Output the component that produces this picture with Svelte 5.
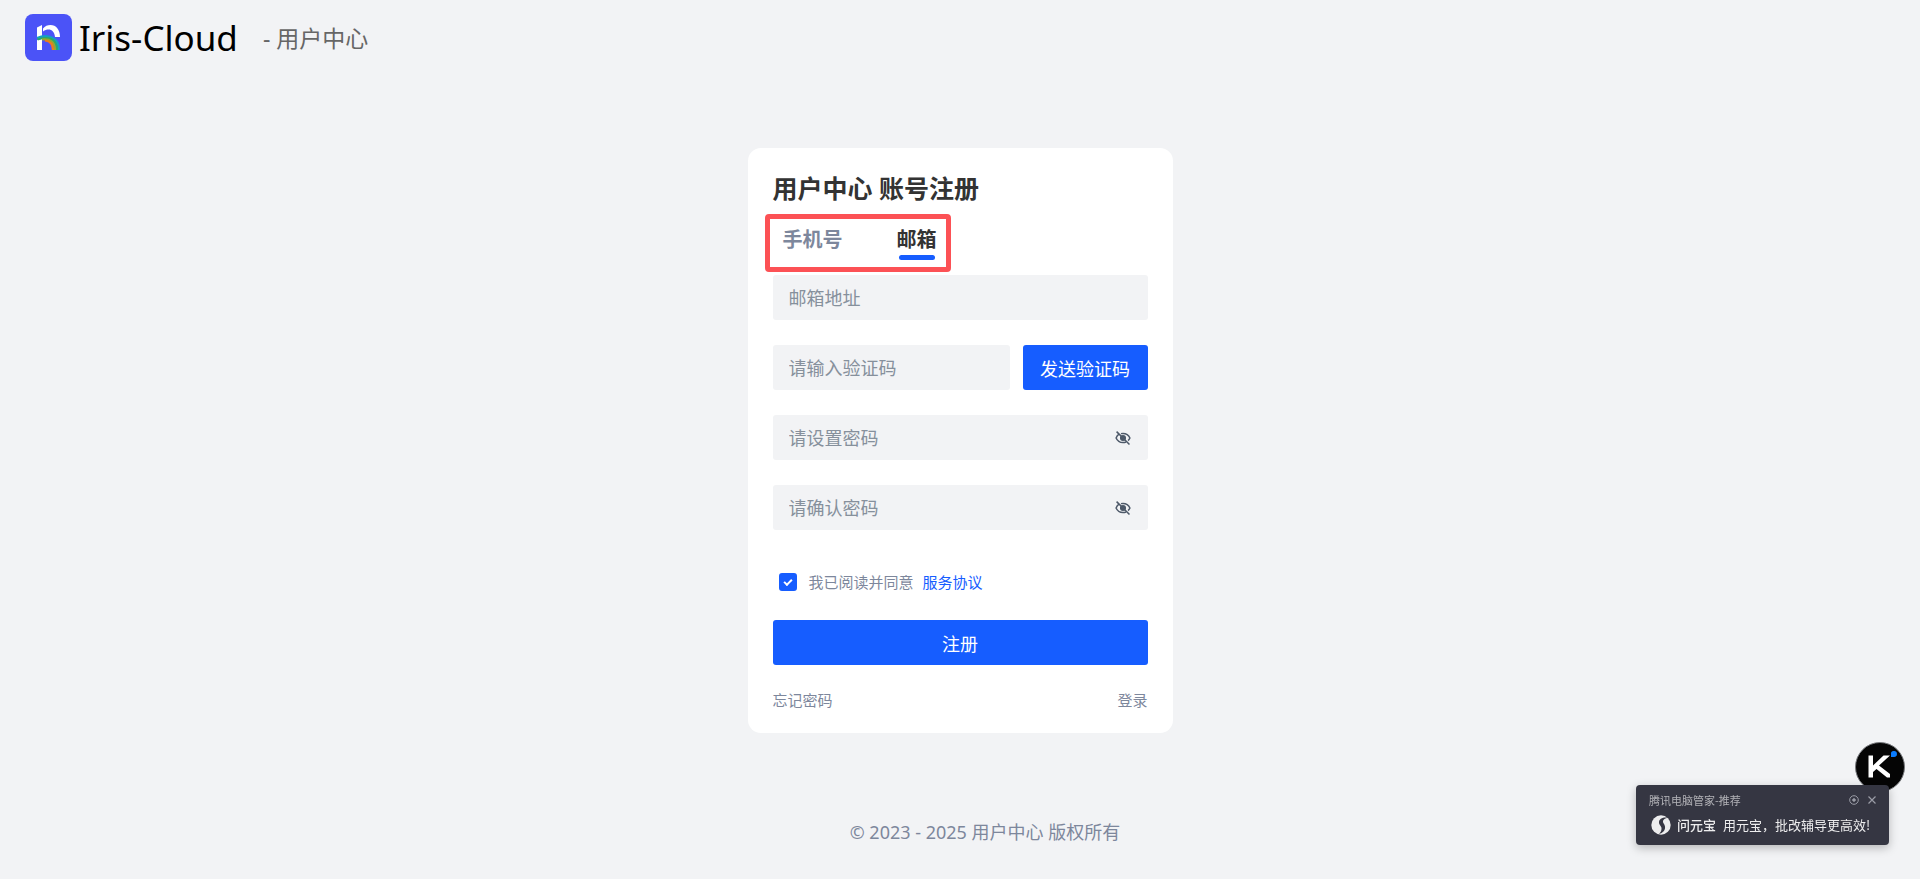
<script lang="ts">
	type Tab = 'phone' | 'email';

	const tabs: { id: Tab; label: string }[] = [
		{ id: 'phone', label: '手机号' },
		{ id: 'email', label: '邮箱' }
	];

	let activeTab: Tab = $state('email');
	let account = $state('');
	let code = $state('');
	let password = $state('');
	let confirmPassword = $state('');
	let showPassword = $state(false);
	let showConfirm = $state(false);
	let agreed = $state(true);
	let popupOpen = $state(true);

	const accountLabel = $derived(activeTab === 'email' ? '邮箱地址' : '手机号码');
</script>

{#snippet eyeIcon()}
	<svg viewBox="0 0 16 16" width="16" height="16" fill="none" stroke="currentColor" stroke-width="1.5">
		<path d="M4 4.2C2.700 5 1.700 6.300 1.100 8c1.300 3 3.700 4.600 6.900 4.600 1.100 0 2.100-.2 3-.6M6 3.600c.6-.2 1.300-.2 2-.2 3.200 0 5.600 1.600 6.900 4.600-.4 1-1 1.900-1.800 2.600" />
		<circle cx="8" cy="8" r="2.300" fill="currentColor" />
		<path d="M1.600 1.600l12.900 12.900" />
	</svg>
{/snippet}

<div class="page">
	<header>
		<svg class="logo" viewBox="0 0 47 47" role="img" aria-label="Iris-Cloud">
			<rect width="47" height="47" rx="8" fill="#4b53f7" />
			<path d="M12 13.500l5-2.500v11l-5 2zM12 26l5-1v11h-5z" fill="#fff" />
			<path d="M18 14.500c2-2.500 4.500-3.500 7.500-3.500 5.500 0 9.500 4.500 9.500 12h-5c-.5-5-3-7.500-6.500-7.500-2 0-3.500.5-5.500 2z" fill="#fff" />
			<g fill="none" stroke-width="2.200">
				<path d="M12 24c10-4.500 22-1 22 12" stroke="#149fc4" />
				<path d="M12.500 25.500c10-3.500 19.500-1 19.500 10.500" stroke="#2cab67" />
				<path d="M17 25.500c8-1 13 2.500 13 10.500" stroke="#98a82c" />
				<path d="M20 26.500c5 .5 8 4 8 9.500" stroke="#ee7c1c" />
			</g>
		</svg>
		<span class="brand">Iris-Cloud</span>
		<span class="site">- 用户中心</span>
	</header>

	<main>
		<form class="card" onsubmit={(e) => e.preventDefault()}>
			<h1>用户中心 账号注册</h1>

			<div class="tabs" role="tablist">
				{#each tabs as tab (tab.id)}
					<button
						type="button"
						role="tab"
						class="tab"
						class:active={activeTab === tab.id}
						aria-selected={activeTab === tab.id}
						onclick={() => (activeTab = tab.id)}
					>
						{tab.label}
					</button>
				{/each}
			</div>

			<div class="fields">
				<input class="field" type="text" aria-label={accountLabel} placeholder={accountLabel} bind:value={account} />
				<div class="code-row">
					<input class="field" type="text" aria-label="验证码" placeholder="请输入验证码" bind:value={code} />
					<button type="button" class="primary send">发送验证码</button>
				</div>
				<div class="field password">
					<input
						type={showPassword ? 'text' : 'password'}
						aria-label="密码"
						placeholder="请设置密码"
						bind:value={password}
					/>
					<button type="button" class="eye" aria-label="显示密码" onclick={() => (showPassword = !showPassword)}>
						{@render eyeIcon()}
					</button>
				</div>
				<div class="field password">
					<input
						type={showConfirm ? 'text' : 'password'}
						aria-label="确认密码"
						placeholder="请确认密码"
						bind:value={confirmPassword}
					/>
					<button type="button" class="eye" aria-label="显示密码" onclick={() => (showConfirm = !showConfirm)}>
						{@render eyeIcon()}
					</button>
				</div>
			</div>

			<div class="agreement">
				<input id="agree" type="checkbox" bind:checked={agreed} />
				<label for="agree">我已阅读并同意</label>
				<a href="#terms">服务协议</a>
			</div>

			<button type="submit" class="primary">注册</button>

			<nav class="links">
				<a href="#forgot">忘记密码</a>
				<a href="#login">登录</a>
			</nav>
		</form>
	</main>

	<footer>© 2023 - 2025 用户中心 版权所有</footer>
</div>

<button type="button" class="assistant" aria-label="K">
	<svg viewBox="0 0 50 50" width="50" height="50">
		<circle cx="25" cy="25" r="24.500" fill="#050505" stroke="#77797d" />
		<path d="M13.500 13.500H18v10l10.500-10H35L24 23.500l11 8.500v3.500h-3L21.500 27 18 30v5.500h-4.500z" fill="#fff" />
		<path d="M36 12.500a3 3 0 1 1 3 2.500h-3z" fill="#0a7cff" />
	</svg>
</button>

{#if popupOpen}
	<aside class="popup">
		<div class="popup-head">
			<span>腾讯电脑管家-推荐</span>
			<button type="button" aria-label="设置">
				<svg viewBox="0 0 10 10" width="10" height="10" fill="none" stroke="currentColor">
					<circle cx="5" cy="5" r="4.300" />
					<circle cx="5" cy="5" r="1.300" fill="currentColor" />
				</svg>
			</button>
			<button type="button" aria-label="关闭" onclick={() => (popupOpen = false)}>
				<svg viewBox="0 0 10 10" width="10" height="10" fill="none" stroke="currentColor" stroke-width="1.200">
					<path d="M1.500 1.500l7 7M8.500 1.500l-7 7" />
				</svg>
			</button>
		</div>
		<div class="popup-body">
			<svg viewBox="0 0 20 20" width="20" height="20">
				<circle cx="10" cy="10" r="9.700" fill="#ededee" />
				<path d="M17 2.800C12 2 8 4 8 7.500c0 3 3 3.500 2.500 6.500-.2 2-1 3.500-2.500 5 4-1 6.500-4 6-7.500-.3-2.500-2.500-3.500-2-5.500.3-1.500 2-2.700 5-3.200z" fill="#353642" />
			</svg>
			<strong>问元宝</strong>
			<span>用元宝，批改辅导更高效!</span>
		</div>
	</aside>
{/if}

<style>
	:global(body) {
		margin: 0;
		background: #f2f3f5;
	}

	.page {
		display: flex;
		flex-direction: column;
		box-sizing: border-box;
		min-height: 100vh;
		font-family: 'Noto Sans', 'Noto Sans CJK SC', sans-serif;
		color: #7d879c;
	}

	button,
	input {
		font-family: inherit;
		border: 0;
		padding: 0;
		margin: 0;
	}

	button {
		cursor: pointer;
	}

	a {
		color: inherit;
		text-decoration: none;
	}

	header {
		display: flex;
		align-items: center;
		height: 75px;
		padding: 0 25px;
	}

	.logo {
		width: 47px;
		height: 47px;
		margin-right: 7px;
	}

	.brand {
		font-size: 35px;
		line-height: 40px;
		color: #000;
	}

	.site {
		margin-left: 25px;
		font-size: 23px;
		line-height: 32px;
		color: #666;
	}

	main {
		display: flex;
		justify-content: center;
		padding-top: 73px;
	}

	.card {
		box-sizing: border-box;
		width: 425px;
		max-width: 100%;
		padding: 24px 25px 23px;
		border-radius: 13px;
		background: #fff;
	}

	h1 {
		margin: 0 0 21px;
		font-size: 25px;
		line-height: 32px;
		color: #333;
	}

	.tabs {
		position: relative;
		display: flex;
		gap: 54px;
		padding-left: 10px;
		margin-bottom: 15px;
	}

	/* red highlight frame around the tabs */
	.tabs::after {
		content: '';
		position: absolute;
		top: -11px;
		bottom: -12px;
		left: -8px;
		width: 176px;
		border: 5px solid #fc5155;
		border-radius: 4px;
		pointer-events: none;
	}

	.tab {
		background: none;
		font-size: 20px;
		font-weight: 700;
		line-height: 30px;
		color: #7d879c;
	}

	.tab::after {
		content: '';
		display: block;
		height: 5px;
		margin: 0 2px;
		border-radius: 3px;
	}

	.tab.active {
		color: #333;
	}

	.tab.active::after {
		background: #165dff;
	}

	.fields {
		display: flex;
		flex-direction: column;
		gap: 25px;
	}

	.field {
		box-sizing: border-box;
		width: 100%;
		min-width: 0;
		height: 45px;
		padding: 0 16px;
		border-radius: 3px;
		background: #f2f3f5;
		font-size: 18px;
		color: #1d2129;
	}

	input::placeholder {
		color: #86909c;
		opacity: 1;
	}

	.code-row {
		display: flex;
		gap: 13px;
	}

	.password {
		display: flex;
		align-items: center;
		padding-right: 17px;
	}

	.password input {
		flex: 1;
		min-width: 0;
		background: none;
		font-size: 18px;
		color: inherit;
	}

	.eye {
		display: flex;
		background: none;
		color: #4e5969;
	}

	.primary {
		width: 100%;
		height: 45px;
		border-radius: 3px;
		background: #165dff;
		font-size: 18px;
		color: #fff;
	}

	.send {
		flex: 0 0 125px;
	}

	.agreement {
		display: flex;
		align-items: center;
		margin: 40px 0 26px;
		padding-left: 6px;
		font-size: 15px;
		line-height: 24px;
	}

	.agreement input {
		appearance: none;
		display: grid;
		place-items: center;
		width: 18px;
		height: 18px;
		margin-right: 12px;
		border: 2px solid #e5e6eb;
		border-radius: 3px;
	}

	.agreement input:checked {
		border-color: #165dff;
		background: #165dff;
	}

	.agreement input:checked::after {
		content: '';
		width: 6px;
		height: 3px;
		border: solid #fff;
		border-width: 0 0 2px 2px;
		transform: translateY(-1px) rotate(-45deg);
	}

	.agreement a {
		margin-left: 9px;
		color: #165dff;
	}

	.links {
		display: flex;
		justify-content: space-between;
		margin-top: 25px;
		font-size: 15px;
		line-height: 20px;
	}

	footer {
		margin-top: 84px;
		padding: 0 0 32px 50px;
		font-size: 18px;
		line-height: 30px;
		text-align: center;
	}

	.assistant {
		position: fixed;
		right: 15px;
		bottom: 87px;
		display: flex;
		background: none;
	}

	.popup {
		position: fixed;
		right: 31px;
		bottom: 34px;
		box-sizing: border-box;
		width: 253px;
		padding: 6px 12px 8px 13px;
		border-radius: 4px;
		background: #353642;
		box-shadow: 0 3px 10px rgba(0, 0, 0, 0.25);
		font-family: 'Noto Sans CJK SC', sans-serif;
	}

	.popup-head {
		display: flex;
		align-items: center;
		gap: 8px;
		font-size: 11px;
		line-height: 18px;
		color: #b2b2b7;
	}

	.popup-head span {
		flex: 1;
	}

	.popup-head button {
		display: flex;
		background: none;
		color: #9a9ca6;
	}

	.popup-body {
		display: flex;
		align-items: center;
		margin: 4px -8px 0 2px;
		font-size: 13px;
		line-height: 24px;
		white-space: nowrap;
		color: #ededee;
	}

	.popup-body strong {
		margin: 0 7px 0 6px;
		font-weight: 500;
	}
</style>
